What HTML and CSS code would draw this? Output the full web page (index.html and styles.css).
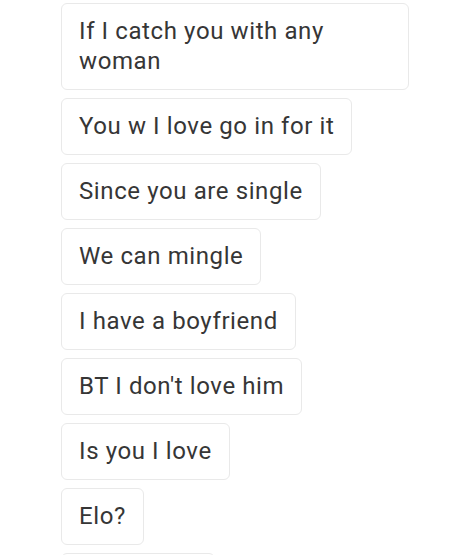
FILE: index.html
```html
<!DOCTYPE html>
<html>
<head>
<meta charset="utf-8">
<link rel="stylesheet" href="styles.css">
</head>
<body>
<div class="chat">
  <div class="bubble">If I catch you with any woman</div>
  <div class="bubble">You w I love go in for it</div>
  <div class="bubble">Since you are single</div>
  <div class="bubble">We can mingle</div>
  <div class="bubble">I have a boyfriend</div>
  <div class="bubble">BT I don't love him</div>
  <div class="bubble">Is you I love</div>
  <div class="bubble">Elo?</div>
  <div class="bubble">You there?</div>
</div>
</body>
</html>
```

FILE: styles.css
```css
html, body {
  margin: 0;
  padding: 0;
  background: #ffffff;
}
body {
  width: 470px;
  height: 555px;
  overflow: hidden;
}
.chat {
  display: flex;
  flex-direction: column;
  align-items: flex-start;
  gap: 8px;
  padding: 3px 0 0 61px;
}
.bubble {
  box-sizing: border-box;
  max-width: 348px;
  padding: 12px 17px 13px 17px;
  font-family: Roboto, "Liberation Sans", sans-serif;
  font-size: 24px;
  letter-spacing: 0.6px;
  line-height: 30px;
  color: #363636;
  border: 1px solid #e9e9e9;
  border-radius: 6px;
  background: #ffffff;
}
```
